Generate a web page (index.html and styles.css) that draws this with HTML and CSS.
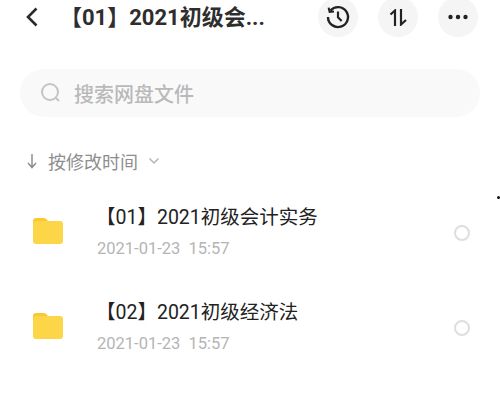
FILE: index.html
```html
<!DOCTYPE html>
<html lang="zh-CN">
<head>
    <meta charset="UTF-8">
    <meta name="viewport" content="width=device-width, initial-scale=1.0">
    <title>【01】2021初级会计实务</title>
    <link rel="stylesheet" href="styles.css">
</head>
<body>
    <div class="page">
        <header class="topbar">
            <svg class="back" width="14" height="20" viewBox="0 0 14 20"><path d="M11.5 1.5 L3 10 L11.5 18.5" fill="none" stroke="#2b2b2b" stroke-width="2.6"/></svg>
            <h1 class="title">【01】2021初级会...</h1>
            <div class="actions">
                <div class="round">
                    <svg width="26" height="26" viewBox="0 0 26 26" fill="none" stroke="#222" stroke-width="2.4"><path d="M5.4 6.6 A10 10 0 1 1 3 13"/><path d="M3.6 3.6 L4.6 8 L9 7.4" stroke-width="2"/><path d="M13 7.6 V13.4 L16.6 17" stroke-width="2.2"/></svg>
                </div>
                <div class="round">
                    <svg width="18" height="17" viewBox="0 0 18 17" fill="none" stroke="#222" stroke-width="2.2"><path d="M6 17 V1.5 L1.5 5.5"/><path d="M12 0 V15.5 L17 11"/></svg>
                </div>
                <div class="round">
                    <svg width="22" height="6" viewBox="0 0 22 6" fill="#222"><circle cx="3.5" cy="3" r="2.2"/><circle cx="11" cy="3" r="2.2"/><circle cx="18.5" cy="3" r="2.2"/></svg>
                </div>
            </div>
        </header>

        <div class="search">
            <svg width="22" height="22" viewBox="0 0 22 22" fill="none" stroke="#c4c4c6" stroke-width="2"><circle cx="10" cy="10" r="8"/><path d="M16 16 L19 19"/></svg>
            <span>搜索网盘文件</span>
        </div>

        <div class="sort">
            <svg width="12" height="16" viewBox="0 0 12 16" fill="none" stroke="#8e8e8e" stroke-width="1.5"><path d="M6 1 V14 M2 10 L6 14.5 L10 10"/></svg>
            <span class="sort-label">按修改时间</span>
            <svg width="12" height="8" viewBox="0 0 12 8" fill="none" stroke="#b5b5b5" stroke-width="1.5"><path d="M1.5 1.5 L6 6 L10.5 1.5"/></svg>
        </div>

        <div class="list">
            <div class="row">
                <svg class="folder" width="30" height="26" viewBox="0 0 30 26"><path d="M3 0 H11 Q13 0 15 3 V8 H0 V3 Q0 0 3 0 Z" fill="#f9c832"/><path d="M0 6 Q0 3 3 3 H27 Q30 3 30 6 V23 Q30 26 27 26 H3 Q0 26 0 23 Z" fill="#fdd548"/></svg>
                <div class="info">
                    <div class="name">【01】2021初级会计实务</div>
                    <div class="date">2021-01-23&nbsp;&nbsp;15:57</div>
                </div>
                <div class="check"></div>
            </div>
            <div class="row">
                <svg class="folder" width="30" height="26" viewBox="0 0 30 26"><path d="M3 0 H11 Q13 0 15 3 V8 H0 V3 Q0 0 3 0 Z" fill="#f9c832"/><path d="M0 6 Q0 3 3 3 H27 Q30 3 30 6 V23 Q30 26 27 26 H3 Q0 26 0 23 Z" fill="#fdd548"/></svg>
                <div class="info">
                    <div class="name">【02】2021初级经济法</div>
                    <div class="date">2021-01-23&nbsp;&nbsp;15:57</div>
                </div>
                <div class="check"></div>
            </div>
        </div>
        <div class="speck"></div>
    </div>
</body>
</html>
```

FILE: styles.css
```css
html, body {
    margin: 0;
    height: 100%;
    overflow: hidden;
}
body {
    background: white;
    font-family: "Roboto", "Noto Sans CJK SC", sans-serif;
}
.page {
    position: relative;
    height: 403px;
    overflow: hidden;
}
.topbar {
    display: flex;
    align-items: center;
    height: 34px;
    padding: 0 22px 0 25px;
}
.back {
    margin-right: 21px;
}
.title {
    margin: -5px 0 0;
    font-size: 22px;
    font-weight: 700;
    color: #2e2e2e;
    white-space: nowrap;
}
.actions {
    display: flex;
    gap: 20px;
    margin-left: auto;
}
.round {
    width: 40px;
    height: 40px;
    border-radius: 50%;
    background: #f5f5f6;
    display: flex;
    align-items: center;
    justify-content: center;
}
.search {
    display: flex;
    align-items: center;
    gap: 12px;
    height: 48px;
    margin: 35px 20px 0;
    padding-left: 20px;
    border-radius: 24px;
    background: #f9f9fa;
    color: #b9b9bb;
    font-size: 20px;
    font-weight: 500;
}
.sort {
    display: flex;
    align-items: center;
    height: 28px;
    margin: 30px 0 0 26px;
    color: #8e8e8e;
    font-size: 18px;
}
.sort-label {
    margin: 0 10px 0 10px;
}
.list {
    margin-top: 6px;
}
.row {
    display: flex;
    align-items: center;
    height: 95px;
    padding: 0 30px 0 33px;
}
.folder {
    flex-shrink: 0;
    margin: 4px 34px 0 0;
}
.info {
    flex: 1;
    padding-top: 7px;
}
.name {
    margin-left: -1px;
    font-size: 19.5px;
    line-height: 28px;
    color: #222;
}
.date {
    margin-top: 6px;
    font-size: 16.5px;
    line-height: 22px;
    color: #b4b4b6;
}
.check {
    width: 12px;
    height: 12px;
    border: 2px solid #dedede;
    border-radius: 50%;
    margin-top: 8px;
}
.speck {
    position: absolute;
    left: 497px;
    top: 196px;
    width: 3px;
    height: 3px;
    border-radius: 50%;
    background: #111;
}
```
